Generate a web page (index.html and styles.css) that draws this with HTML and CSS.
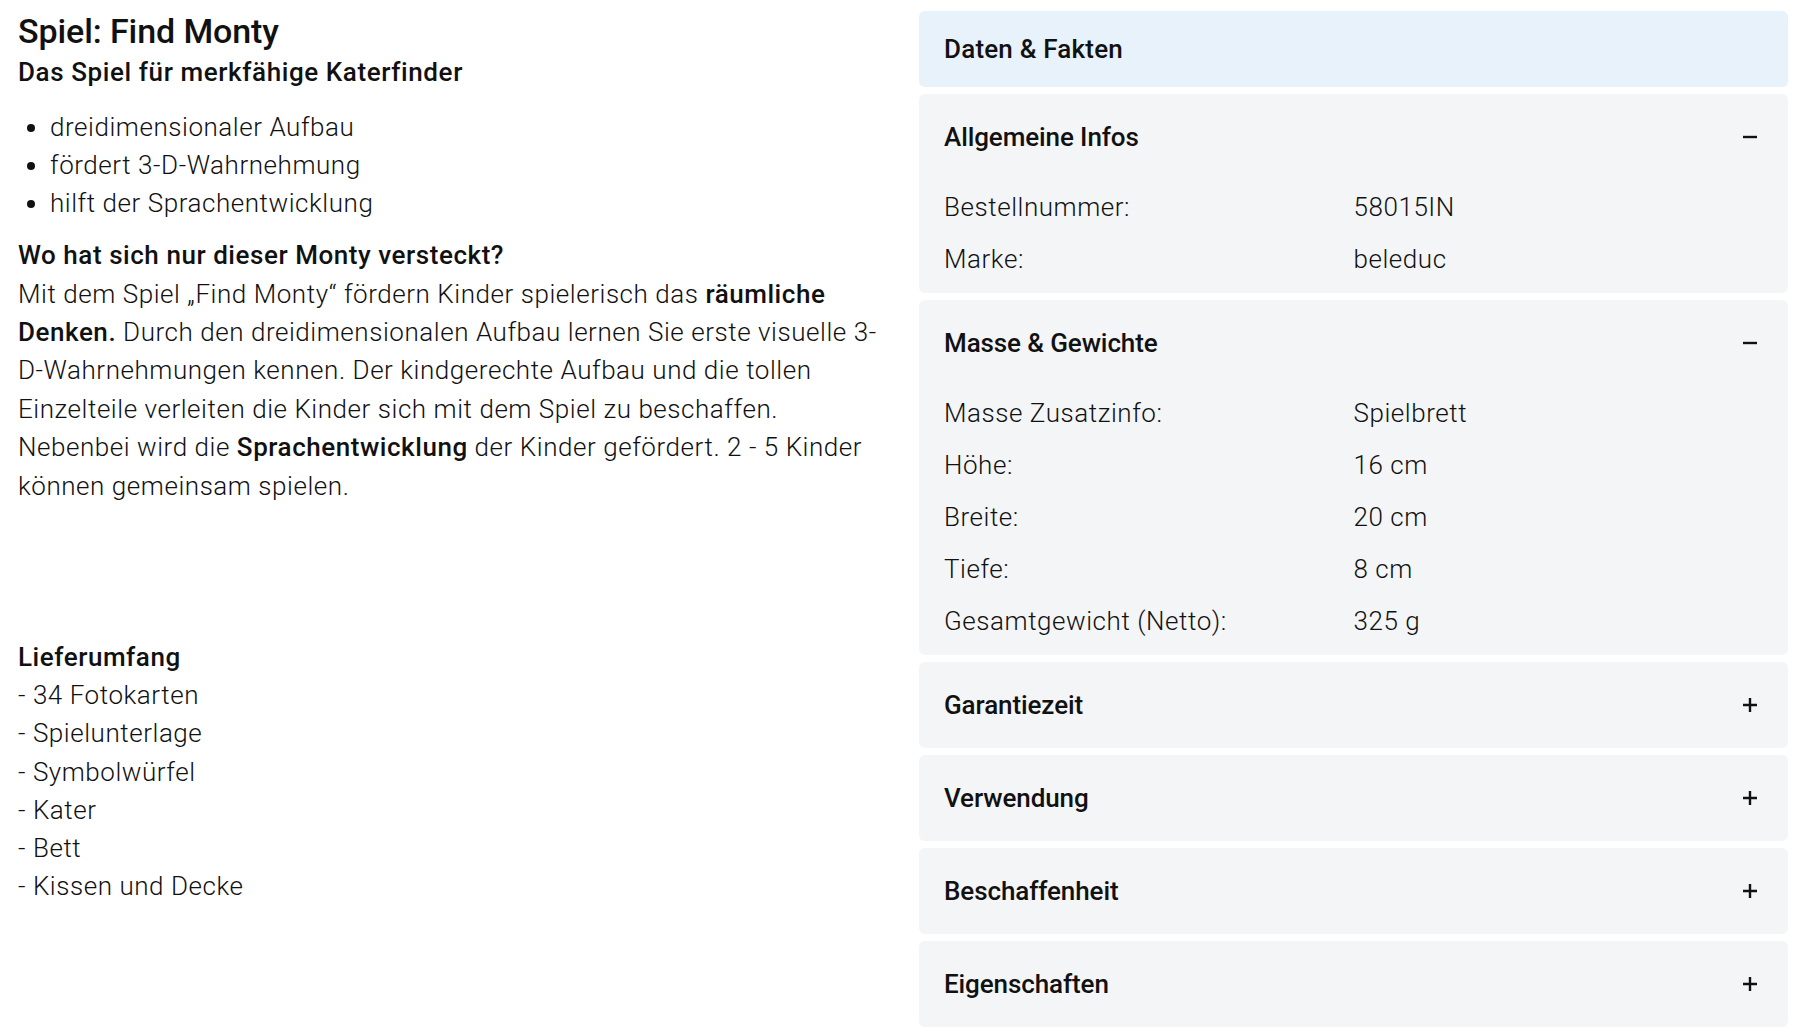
FILE: index.html
```html
<!DOCTYPE html>
<html lang="de">
<head>
  <meta charset="UTF-8" />
  <meta name="viewport" content="width=device-width, initial-scale=1.0"/>
  <title>Spiel: Find Monty</title>
  <link rel="stylesheet" href="styles.css">
</head>
<body>

  <div class="seite">
    <section class="beschreibung">
      <h1>Spiel: Find Monty</h1>
      <h2>Das Spiel für merkfähige Katerfinder</h2>
      <ul class="vorteile">
        <li>dreidimensionaler Aufbau</li>
        <li>fördert 3-D-Wahrnehmung</li>
        <li>hilft der Sprachentwicklung</li>
      </ul>
      <p>
        <strong>Wo hat sich nur dieser Monty versteckt?</strong><br>
        Mit dem Spiel „Find Monty“ fördern Kinder spielerisch das <strong>räumliche Denken.</strong> Durch den dreidimensionalen Aufbau lernen Sie erste visuelle 3-D-Wahrnehmungen kennen. Der kindgerechte Aufbau und die tollen Einzelteile verleiten die Kinder sich mit dem Spiel zu beschaffen. Nebenbei wird die <strong>Sprachentwicklung</strong> der Kinder gefördert. 2 - 5 Kinder können gemeinsam spielen.
      </p>
      <p class="lieferumfang">
        <strong>Lieferumfang</strong><br>
        - 34 Fotokarten<br>
        - Spielunterlage<br>
        - Symbolwürfel<br>
        - Kater<br>
        - Bett<br>
        - Kissen und Decke
      </p>
    </section>

    <aside class="fakten">
      <div class="fakten-titel">Daten &amp; Fakten</div>

      <div class="box offen">
        <div class="box-kopf">
          <span>Allgemeine Infos</span>
          <svg class="icon" viewBox="0 0 16 16"><path d="M1 8h14"/></svg>
        </div>
        <div class="box-inhalt">
          <div class="zeile"><span>Bestellnummer:</span><span>58015IN</span></div>
          <div class="zeile"><span>Marke:</span><span>beleduc</span></div>
        </div>
      </div>

      <div class="box offen">
        <div class="box-kopf">
          <span>Masse &amp; Gewichte</span>
          <svg class="icon" viewBox="0 0 16 16"><path d="M1 8h14"/></svg>
        </div>
        <div class="box-inhalt">
          <div class="zeile"><span>Masse Zusatzinfo:</span><span>Spielbrett</span></div>
          <div class="zeile"><span>Höhe:</span><span>16 cm</span></div>
          <div class="zeile"><span>Breite:</span><span>20 cm</span></div>
          <div class="zeile"><span>Tiefe:</span><span>8 cm</span></div>
          <div class="zeile"><span>Gesamtgewicht (Netto):</span><span>325 g</span></div>
        </div>
      </div>

      <div class="box">
        <div class="box-kopf">
          <span>Garantiezeit</span>
          <svg class="icon" viewBox="0 0 16 16"><path d="M1 8h14M8 1v14"/></svg>
        </div>
      </div>

      <div class="box">
        <div class="box-kopf">
          <span>Verwendung</span>
          <svg class="icon" viewBox="0 0 16 16"><path d="M1 8h14M8 1v14"/></svg>
        </div>
      </div>

      <div class="box">
        <div class="box-kopf">
          <span>Beschaffenheit</span>
          <svg class="icon" viewBox="0 0 16 16"><path d="M1 8h14M8 1v14"/></svg>
        </div>
      </div>

      <div class="box">
        <div class="box-kopf">
          <span>Eigenschaften</span>
          <svg class="icon" viewBox="0 0 16 16"><path d="M1 8h14M8 1v14"/></svg>
        </div>
      </div>
    </aside>
  </div>

</body>
</html>
```

FILE: styles.css
```css
body {
  margin: 0; padding: 0;
  font-family: Roboto, 'Liberation Sans', sans-serif;
  font-size: 26px;
  font-weight: 300;
  line-height: 38.4px;
  letter-spacing: 0.55px;
  background: #fff; color: #111;
}

strong { font-weight: 500; }

.seite {
  display: grid;
  grid-template-columns: 1fr 869px;
  column-gap: 33px;
  padding: 11px 12px 0 18px;
}

/* linke Spalte */
.beschreibung h1 {
  margin: 0;
  font-size: 34px;
  font-weight: 500;
  line-height: 40px;
  letter-spacing: -0.1px;
}

.beschreibung h2 {
  margin: 2px 0 0;
  font-size: 26px;
  font-weight: 500;
  line-height: 38.4px;
  letter-spacing: 0.6px;
}

.vorteile {
  margin: 18px 0 14px;
  padding-left: 32px;
  line-height: 37.6px;
}

.beschreibung p { margin: 0; }

.beschreibung .lieferumfang {
  margin-top: 133px;
  line-height: 38.2px;
}

/* rechte Spalte */
.fakten {
  display: flex;
  flex-direction: column;
  gap: 7px;
}

.fakten-titel {
  background: #e7f2fa;
  border-radius: 6px;
  padding: 19px 25px;
  font-weight: 500;
  line-height: 38px;
  letter-spacing: 0.2px;
}

.box {
  background: #f4f5f7;
  border-radius: 6px;
}

.box-kopf {
  display: flex;
  align-items: center;
  justify-content: space-between;
  padding: 23.5px 30px 23.5px 25px;
  font-weight: 500;
  line-height: 39px;
  letter-spacing: -0.1px;
}

.icon {
  width: 16px; height: 16px;
  stroke: #111;
  stroke-width: 2.4;
  fill: none;
}

.box-inhalt { padding: 1px 25px 8px; }

.zeile {
  display: grid;
  grid-template-columns: 1fr 1fr;
  line-height: 52px;
}
```
